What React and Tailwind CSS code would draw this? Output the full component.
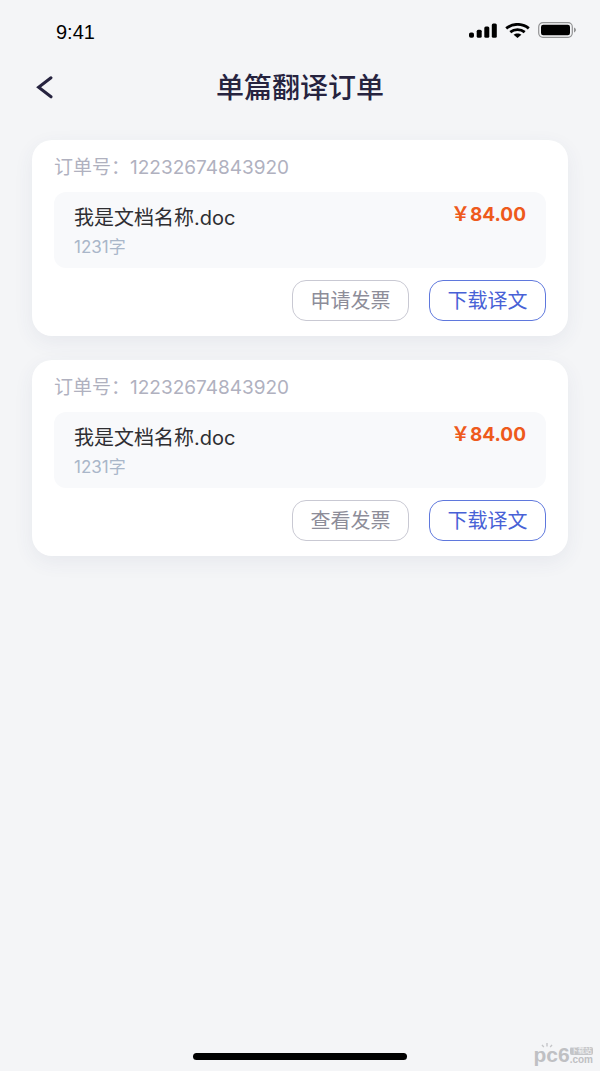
const orders = [
  {
    id: 1,
    number: "12232674843920",
    file: "我是文档名称.doc",
    words: "1231字",
    price: "84.00",
    invoice: "申请发票",
  },
  {
    id: 2,
    number: "12232674843920",
    file: "我是文档名称.doc",
    words: "1231字",
    price: "84.00",
    invoice: "查看发票",
  },
];

function StatusBar() {
  return (
    <div className="flex h-16 items-center justify-between pr-[23px] pl-14">
      <span className="font-['Liberation_Sans',sans-serif] text-xl text-black">9:41</span>
      <div className="flex items-center gap-2 pb-1">
        {/* Signal */}
        <svg width="28" height="15" viewBox="0 0 28 15" fill="#000">
          <rect x="0" y="9.5" width="5" height="5.3" rx="1.8" />
          <rect x="7.7" y="6.8" width="5" height="8" rx="1.5" />
          <rect x="15.3" y="3.6" width="5" height="11.2" rx="1.5" />
          <rect x="22.8" y="0.5" width="5" height="14.3" rx="1.5" />
        </svg>
        {/* Wifi */}
        <svg width="25" height="15" viewBox="0 0 25 15" fill="none" stroke="#000" strokeWidth="2.8">
          <path d="M1.2 5.4C7.6 0 17.4 0 23.8 5.4" />
          <path d="M5.3 9.2C9.4 5.8 15.6 5.8 19.7 9.2" />
          <path d="M8.6 11.8C10.8 9.9 14.2 9.9 16.4 11.8L12.5 15Z" fill="#000" stroke="none" />
        </svg>
        {/* Battery */}
        <svg width="39" height="16" viewBox="0 0 39 16" fill="none">
          <rect x="0.7" y="0.7" width="33.6" height="14.6" rx="4.2" stroke="#000" strokeOpacity="0.4" strokeWidth="1.2" />
          <rect x="3" y="2.8" width="29" height="10.4" rx="2.2" fill="#000" />
          <path d="M36 5.6C38.6 6.4 38.6 9.6 36 10.4Z" fill="#000" fillOpacity="0.4" />
        </svg>
      </div>
    </div>
  );
}

function Header() {
  return (
    <header className="grid h-12 grid-cols-[40px_1fr_40px] items-center px-6">
      <button type="button" aria-label="返回" className="flex h-10 w-10 items-center justify-center">
        <svg width="18" height="24" viewBox="0 0 18 24" fill="none" stroke="#26233f" strokeWidth="3">
          <path d="M16 1.8L3.6 11.3L16 20.8" strokeLinecap="round" />
        </svg>
      </button>
      <h1 className="text-center text-[28px] leading-9 font-medium text-[#26233f]">单篇翻译订单</h1>
    </header>
  );
}

function OrderCard({ order }) {
  return (
    <li className="rounded-[20px] bg-white px-[22px] pt-3 pb-[15px] shadow-[0_6px_20px_rgba(60,70,110,0.07)]">
      <p className="text-[19px] leading-8 text-[#b0b1bf]">
        订单号：
        <span>{order.number}</span>
      </p>
      <div className="mt-2 flex h-[76px] items-start justify-between rounded-xl bg-[#f8f9fb] px-5 pt-3">
        <div>
          <h2 className="text-xl leading-7 text-[#2e2e32]">{order.file}</h2>
          <p className="text-[17px] leading-[30px] text-[#a9b6c9]">{order.words}</p>
        </div>
        <p className="flex text-[19px] leading-[22px] font-bold text-[#ee5a1c]">
          <span>￥</span>
          <span>{order.price}</span>
        </p>
      </div>
      <div className="mt-3 flex justify-end gap-5">
        <button
          type="button"
          className="h-[41px] w-[117px] rounded-[14px] border border-[#c9c9d3] text-xl text-[#8d8d99]"
        >
          {order.invoice}
        </button>
        <button
          type="button"
          className="h-[41px] w-[117px] rounded-[14px] border border-[#5f78dd] text-xl text-[#4861d6]"
        >
          下载译文
        </button>
      </div>
    </li>
  );
}

function Watermark() {
  return (
    <div className="absolute right-[7px] bottom-1.5 flex items-end text-[#bfc0c3]">
      <svg
        className="absolute -top-0.5 left-2"
        width="12"
        height="5"
        viewBox="0 0 12 5"
        fill="none"
        stroke="#c4c5c8"
        strokeWidth="1.4"
      >
        <path d="M1 1.8L2.8 4.2M6 0V3.4M11 1.8L9.2 4.2" />
      </svg>
      <span className="font-['Liberation_Sans',sans-serif] text-[21px] leading-5 font-bold">pc6</span>
      <span className="flex flex-col">
        <span className="rounded-xs bg-[#c4c5c8] px-px text-center text-[7px] leading-[8px] text-[#f4f5f7]">下载站</span>
        <span className="font-['Liberation_Sans',sans-serif] text-[10px] leading-[10px] font-bold">.com</span>
      </span>
    </div>
  );
}

export default function App() {
  return (
    <div className="relative flex min-h-screen flex-col bg-[#f4f5f7] font-['Inter','Noto_Sans_CJK_SC',sans-serif]">
      <StatusBar />
      <Header />
      <main className="px-8 pt-7">
        <ul className="flex flex-col gap-6">
          {orders.map((order) => (
            <OrderCard key={order.id} order={order} />
          ))}
        </ul>
      </main>
      <div className="mx-auto mt-auto mb-[11px] h-[7px] w-[214px] rounded-full bg-black" />
      <Watermark />
    </div>
  );
}
